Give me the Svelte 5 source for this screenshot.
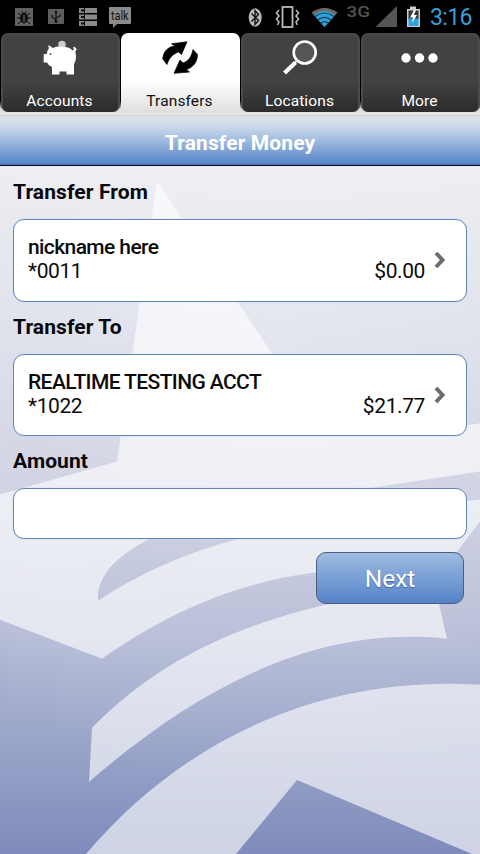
<script lang="ts">
	let activeTab = "Transfers";
	let amount = "";

	const tabs: Array<string> = ["Accounts", "Transfers", "Locations", "More"];

	const sections = [
		{ label: "Transfer From", name: "nickname here", number: "*0011", balance: "$0.00", key: "from" },
		{ label: "Transfer To", name: "REALTIME TESTING ACCT", number: "*1022", balance: "$21.77", key: "to" },
	];
</script>

<div class="screen">
	<div class="status">
		<svg class="notifications" width="140" height="33" viewBox="0 0 140 33">
			<rect x="15" y="8" width="18" height="18" fill="#626262" />
			<g stroke="#111" fill="#111">
				<ellipse cx="24" cy="18" rx="3.4" ry="5" />
				<path d="M18 13l4 3M30 13l-4 3M17 18h14M18 24l4-4M30 24l-4-4M21 11l2 2M27 11l-2 2" fill="none" />
				<path d="M24 15v7" stroke="#777" />
			</g>
			<rect x="48" y="9" width="16" height="15" fill="#5e5e5e" />
			<path d="M56 11v11M52 15v2l4 3M60 14v2l-4 2" fill="none" stroke="#111" stroke-width="1.2" />
			<path d="M54.5 12.5L56 10l1.500 2.500z" fill="#111" />
			<circle cx="56" cy="21.500" r="1.500" fill="#111" />
			<path d="M79 8h18v5H79zM79 14.500h18v5H79zM79 21h18v5H79z" fill="#8b8b8b" />
			<path d="M81 9.500h3v2h-3zM81 16h3v2h-3zM81 22.500h3v2h-3z" fill="#111" />
			<path d="M84.500 8v18" stroke="#111" />
			<path d="M110 7h20q1 0 1 1v15q0 1-1 1h-13l-4 4v-4h-3q-1 0-1-1V8q0-1 1-1z" fill="#8b8b8b" />
			<text x="111" y="19.500" font-size="12" textLength="17.500" lengthAdjust="spacingAndGlyphs" fill="#111">talk</text>
		</svg>
		<svg width="183" height="33" viewBox="247 0 183 33">
			<ellipse cx="255.200" cy="17.500" rx="6.500" ry="9.300" fill="#b9b9b9" />
			<path d="M251.500 13.500l7 7-3.500 4V10.500l3.500 4-7 7" fill="none" stroke="#111" stroke-width="1.400" />
			<rect x="282.500" y="7" width="10" height="20" fill="none" stroke="#bbb" stroke-width="1.800" />
			<path d="M279 10l-2.500 3 2.500 3-2.500 3 2.500 3-1.500 3M296 10l2.500 3-2.500 3 2.500 3-2.500 3 1.500 3" fill="none" stroke="#bbb" stroke-width="1.600" />
			<path d="M311.500 12.500Q324.500 3.500 337.500 12.500L324.500 27z" fill="#75695f" />
			<path d="M314 15.200Q324.500 6.500 335 15.200L324.500 27z" fill="#2e9fda" />
			<path d="M315 16.500q9.500-7 19 0M318 19.800q6.500-5 13 0M321 23q3.500-2.500 7 0" fill="none" stroke="#000" stroke-opacity=".65" stroke-width="1.200" />
			<text x="346.500" y="16.500" font-size="15.500" font-weight="500" textLength="23.500" lengthAdjust="spacingAndGlyphs" fill="#555">3G</text>
			<path d="M375.500 27L397 6v21z" fill="#555" />
			<path d="M410 6.500h6v2.500h4v18h-13V9h3z" fill="#cfcfcf" />
			<path d="M408.500 10.500h10v9h-10z" fill="#333" />
			<path d="M408.500 18.500h10v7.500h-10z" fill="#2da4e3" />
			<path d="M414 10l-4 7.500h3l-1 5.500 5-8h-3l2-5z" fill="#fff" />
		</svg>
		<span class="clock">3:16</span>
	</div>

	<nav>
		{#each tabs as tab}
			<button class="tab" class:active={activeTab === tab} on:click={() => (activeTab = tab)}>
				<svg width="40" height="40" viewBox="0 0 40 40">
					{#if tab === "Accounts"}
						<circle cx="22" cy="4.500" r="3.800" fill="#ccc" />
						<path d="M8.500 5l4.500 3q5-2.500 15-.5 3 1 4.500 3l1.500-1-1-2 1.500-.8 2.300 2.500-1.500 2.500q2 7-1.300 12.500v10.300h-7.500v-3h-7v3h-7.500v-7.500q-3.500-1-5-4.500h-3.300v-8.500h3q0-3 2-5z" fill="#fff" />
						<circle cx="10.500" cy="14" r="1" fill="#555" />
					{:else if tab === "Transfers"}
						<path d="M7 24.500L2.800 19C3 12 8 6.500 15 6L11.500 3.800 27 1.800 21.500 14.500l-3-2.500C13 14 9 18 7 24.500z" stroke="#000" stroke-width=".7" />
						<path d="M33 9.500l4.500 5C37.500 22 33 27.500 26.500 29.500l3 2.500L14 33.300 20 20l3 3C28 21.500 31.500 17 33 9.500z" stroke="#000" stroke-width=".7" />
					{:else if tab === "Locations"}
						<circle cx="24.700" cy="12.500" r="11" fill="#555" stroke="#fff" stroke-width="2.600" />
						<path d="M17 20.500l-2.500 2.700" stroke="#ddd" stroke-width="2" />
						<path d="M15.500 22.500L4.500 33" stroke="#fff" stroke-width="4.200" />
					{:else}
						<g fill="#fff">
							<circle cx="6" cy="18" r="4.700" />
							<circle cx="19.500" cy="18" r="4.700" />
							<circle cx="33" cy="18" r="4.700" />
						</g>
					{/if}
				</svg>
				<span>{tab}</span>
			</button>
		{/each}
	</nav>

	<h1>Transfer Money</h1>

	<main>
		<!-- star and stripes behind the form -->
		<svg class="backdrop" viewBox="0 167 480 687" preserveAspectRatio="none">
			<defs>
				<linearGradient id="sky" x1="0" y1="0" x2="0" y2="1">
					<stop offset="0" stop-color="#eeeef2" />
					<stop offset=".25" stop-color="#dfe1eb" />
					<stop offset=".5" stop-color="#cfd1e2" />
					<stop offset=".67" stop-color="#bbc1d9" />
					<stop offset=".85" stop-color="#9ba6c9" />
					<stop offset="1" stop-color="#7f8bbb" />
				</linearGradient>
				<radialGradient id="glow" cx="280" cy="330" r="460" gradientUnits="userSpaceOnUse">
					<stop offset="0" stop-color="#fff" stop-opacity=".16" />
					<stop offset=".6" stop-color="#fff" stop-opacity="0" />
					<stop offset="1" stop-color="#7f8bbb" stop-opacity=".12" />
				</radialGradient>
			</defs>
			<rect y="167" width="480" height="687" fill="url(#sky)" />
			<rect y="167" width="480" height="687" fill="url(#glow)" />
			<g fill="#fff" fill-opacity=".62">
				<path d="M157 182L318 423Q400 436 480 424V472L380 487Q250 505 150 539C114 558 97 577 98 601Q162 559 240 539Q350 512 480 500V522L441 573Q380 562 315 573C235 583 166 614 102 659L0 620V495L117 462Z" />
				<path d="M92 728C155 664 230 628 325 605Q380 592 439 604L447 639C320 626 205 682 89 782Z" />
				<path d="M86 854C190 732 330 676 480 685V857L472 854 297 780 236 854Z" />
			</g>
		</svg>

		<div class="form">
			{#each sections as section (section.key)}
				<h2>{section.label}</h2>
				<button class="account">
					<div class="details">
						<strong>{section.name}</strong>
						<div class="numbers">
							<span>{section.number}</span>
							<span>{section.balance}</span>
						</div>
					</div>
					<svg width="14" height="18" viewBox="0 0 14 18">
						<path d="M3 2l6.500 7L3 16" fill="none" stroke="#6c6c6c" stroke-width="4" />
					</svg>
				</button>
			{/each}
			<h2>Amount</h2>
			<input type="text" aria-label="Amount" bind:value={amount} />
			<button class="next">Next</button>
		</div>
	</main>
</div>

<style>
	:global(body) {
		margin: 0;
		background: #000;
	}
	.screen {
		width: 480px;
		height: 854px;
		overflow: hidden;
		display: flex;
		flex-direction: column;
		font-family: Roboto, "Liberation Sans", sans-serif;
		color: #0b0b0b;
	}
	button {
		font: inherit;
		color: inherit;
		padding: 0;
	}
	svg {
		display: block;
	}
	.status {
		height: 33px;
		display: flex;
		background: #000;
	}
	.notifications {
		margin-right: auto;
	}
	.clock {
		width: 50px;
		font-size: 23px;
		line-height: 35px;
		letter-spacing: -0.6px;
		color: #3a9fd5;
	}
	nav {
		height: 80px;
		flex: none;
		display: grid;
		grid-template-columns: repeat(4, 1fr);
		background: linear-gradient(#000 0, #000 85%, #e2e2e2 95%);
	}
	.tab {
		display: flex;
		flex-direction: column;
		align-items: center;
		box-sizing: border-box;
		height: 79px;
		margin: 0 0 0 1px;
		padding: 5px 2px 0 0;
		border: 2px solid #4b4b4b;
		border-bottom: 0;
		border-radius: 7px;
		background: linear-gradient(#424242 60%, #2c2c2c);
		color: #fff;
		font-size: 15.5px;
	}
	.tab span {
		margin-top: 11px;
		line-height: 20px;
		letter-spacing: 0.12px;
	}
	.tab.active {
		height: 80px;
		border-width: 0;
		padding: 7px 2px 0 0;
		border-radius: 7px 7px 0 0;
		background: linear-gradient(#fff 60%, #dedede);
		color: #111;
	}
	h1 {
		margin: 0;
		height: 51px;
		flex: none;
		border-top: 1px solid #ececec;
		border-bottom: 1px solid #05051c;
		box-sizing: content-box;
		background: linear-gradient(#d9d9d9 0, #d8e2ed 5px, #cbd9ea 25%, #5988ca 96%, #4770b6);
		color: #fff;
		font-size: 21px;
		line-height: 58px;
		letter-spacing: 0.12px;
		text-align: center;
	}
	main {
		flex: 1;
		position: relative;
	}
	.backdrop {
		position: absolute;
		inset: 0;
		width: 100%;
		height: 100%;
	}
	.form {
		position: relative;
		display: flex;
		flex-direction: column;
		padding: 1px 13px 0;
	}
	h2 {
		margin: 0;
		height: 52px;
		font-size: 21px;
		line-height: 50px;
		letter-spacing: 0.1px;
		color: #08080c;
	}
	.account,
	input {
		box-sizing: border-box;
		width: 454px;
		border: 1.5px solid #6485bd;
		border-radius: 11px;
		background: #fff;
		box-shadow: 0 0 2px #c5dcf5;
	}
	.account {
		display: flex;
		align-items: center;
		height: 82.5px;
		padding: 0 19px 0 14px;
		text-align: left;
		font-size: 21px;
		line-height: 24px;
	}
	.details {
		flex: 1;
		padding-bottom: 2px;
	}
	.account strong {
		font-weight: 500;
		letter-spacing: -0.6px;
	}
	.numbers {
		display: flex;
		justify-content: space-between;
		margin-right: 8px;
		letter-spacing: -0.4px;
	}
	input {
		height: 51px;
		padding: 0 14px;
		font: 21px Roboto, sans-serif;
	}
	.next {
		align-self: flex-end;
		box-sizing: border-box;
		width: 148px;
		height: 52px;
		margin: 13px 3px 0 0;
		border: 1.5px solid #4d5d7c;
		border-radius: 10px;
		background: linear-gradient(#9fbbe1, #5483c8);
		color: #fff;
		font-size: 24.5px;
		line-height: 52px;
		text-shadow: 0 1px 1px #3f659c;
	}
</style>
